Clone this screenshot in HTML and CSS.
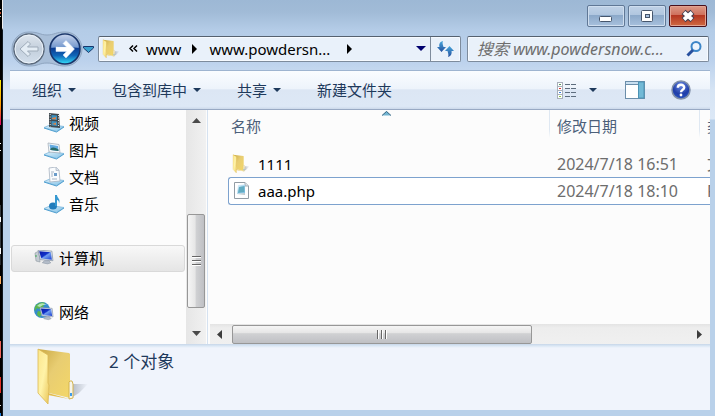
FILE: index.html
```html
<!DOCTYPE html>
<html lang="zh-CN">
<head>
<meta charset="utf-8">
<title>www.powdersnow</title>
<link rel="stylesheet" href="styles.css">
</head>
<body>
<svg width="0" height="0" class="defs" aria-hidden="true">
  <defs>
    <linearGradient id="gFront" x1="0" y1="0" x2="1" y2="1"><stop offset="0" stop-color="#fbe68c"/><stop offset=".5" stop-color="#fff3a8"/><stop offset="1" stop-color="#e9c558"/></linearGradient>
    <linearGradient id="gBack" x1="0" y1="0" x2="1" y2="1"><stop offset="0" stop-color="#c9a844"/><stop offset=".45" stop-color="#e8cd72"/><stop offset="1" stop-color="#f4d768"/></linearGradient>
    <linearGradient id="gShade" x1="0" y1="0" x2="1" y2="0"><stop offset="0" stop-color="#98a0ac" stop-opacity=".8"/><stop offset="1" stop-color="#98a0ac" stop-opacity="0"/></linearGradient>
    <linearGradient id="gOff" x1="0" y1="0" x2="0" y2="1"><stop offset="0" stop-color="#dfe6ee"/><stop offset=".5" stop-color="#c3cfdc"/><stop offset="1" stop-color="#d4e0ed"/></linearGradient>
    <linearGradient id="gOn" x1="0" y1="0" x2="0" y2="1"><stop offset="0" stop-color="#b6c6e6"/><stop offset=".44" stop-color="#4a78bd"/><stop offset=".48" stop-color="#0b3c91"/><stop offset=".72" stop-color="#0f66b8"/><stop offset="1" stop-color="#35e0fa"/></linearGradient>
    <linearGradient id="gTray" x1="0" y1="0" x2="1" y2="1"><stop offset="0" stop-color="#e2f3fc"/><stop offset="1" stop-color="#7dbfe6"/></linearGradient>
    <linearGradient id="gScreen" x1="0" y1="0" x2="1" y2="1"><stop offset="0" stop-color="#0818a8"/><stop offset=".45" stop-color="#1232c8"/><stop offset=".55" stop-color="#6f9cf0"/><stop offset="1" stop-color="#1b3fd0"/></linearGradient>
    <linearGradient id="gBlue" x1="0" y1="0" x2="0" y2="1"><stop offset="0" stop-color="#48a8dc"/><stop offset="1" stop-color="#244f9e"/></linearGradient>
    <radialGradient id="gHelp" cx=".5" cy=".25" r=".8"><stop offset="0" stop-color="#6d8ce2"/><stop offset=".6" stop-color="#1f3da8"/><stop offset="1" stop-color="#2a58c8"/></radialGradient>
    <symbol id="folder" viewBox="0 0 54 60">
      <path d="M34 50 38 37 53 37 44 46 36 51Z" fill="url(#gShade)"/>
      <path d="M3 2 34 6 35 7V51L14 46Z" fill="url(#gBack)"/>
      <path d="M35 34h2l1 3v14l-4 1V35Z" fill="#f7f5e9" stroke="#d5b44e"/>
      <path d="M35 46h2v3h-2z" fill="#3d9bea"/>
      <path d="M3 2 13 8V36L14 38 13 57 3 46Z" fill="url(#gFront)" stroke="#dcb954" stroke-width=".8"/>
      <path d="M13 46 34 52 13 48Z" fill="#e4bd4b"/>
    </symbol>
    <symbol id="tray" viewBox="0 0 20 20">
      <path d="M0 14.5 7 11.5 20 13.5 12.5 18.5Z" fill="url(#gTray)" stroke="#72b2da" stroke-width=".7"/>
      <path d="M0 15 12.5 19 20 14" fill="none" stroke="#4f9fd0"/>
    </symbol>
    <symbol id="monitor" viewBox="0 0 16 14">
      <path d="M1 0 14 1 15 10 3 9Z" fill="#dfe5ec" stroke="#8693a6" stroke-width=".7"/>
      <path d="M2 1 13 2 14 9 4 8Z" fill="url(#gScreen)"/>
      <path d="M7 10h4l2 2-3 1-5-1Z" fill="#b4bdc9" stroke="#8792a0" stroke-width=".5"/>
    </symbol>
  </defs>
</svg>

<div class="desktop" aria-hidden="true"></div>
<main class="window">
  <header class="titlebar">
    <button class="caption" aria-label="最小化"><svg width="14" height="14"><rect x=".5" y="7.5" width="12" height="5" rx="1" fill="#fff" stroke="#46566c"/></svg></button>
    <button class="caption" aria-label="最大化"><svg width="14" height="14"><rect x="1.5" y="1.5" width="11" height="11" rx="1" fill="#fff" stroke="#46566c"/><rect x="5.5" y="5.5" width="4" height="3" fill="#a9c2e0" stroke="#46566c"/></svg></button>
    <button class="caption close" aria-label="关闭"><svg width="16" height="14"><path d="M3.5 3 12.500 11M12.500 3 3.500 11" stroke="#463f50" stroke-width="6"/><path d="M4 3.500 12 10.500M12 3.500 4 10.500" stroke="#fff" stroke-width="3.800"/></svg></button>
  </header>

  <div class="navbar">
    <div class="history">
      <svg class="history-art" width="85" height="36" viewBox="0 0 85 36" aria-hidden="true">
        <path d="M18 1C28 1 29 4 36 4S45 1 54 1C64 1 71 9 71 18S64 35 54 35C45 35 44 32 36 32S28 35 18 35C8 35 1 27 1 18S8 1 18 1Z" fill="#a9bfd9" stroke="#8fa5c0"/>
        <circle cx="18" cy="18" r="15" fill="url(#gOff)" stroke="#5b697b" stroke-width="1.5"/>
        <circle cx="18" cy="18" r="14" fill="none" stroke="#edf4fb"/>
        <path d="M9 18 17 10.5 19.5 13 16.5 16H27v4H16.5L19.5 23 17 25.5Z" fill="#e4edf5" stroke="#9eabb9"/>
        <circle cx="54" cy="18" r="15" fill="url(#gOn)" stroke="#173368" stroke-width="1.5"/>
        <path d="M40.5 17A13.5 13.5 0 0 1 67.5 17Q54 13 40.5 17Z" fill="#fff" opacity=".25"/>
        <path d="M63.5 18 55 9.5 52 12.5 55.5 16H45v4.5H55.5L52 24 55 27Z" fill="#fff" stroke="#dcecff" stroke-width=".5"/>
        <path d="M72.5 15.5H82.5V17L77.5 21.5 72.5 17Z" fill="#39a0cf" stroke="#17376d"/>
      </svg>
      <button class="hit hit-arrow" aria-label="后退"></button><button class="hit hit-arrow" aria-label="前进"></button><button class="hit hit-menu" aria-label="最近的页面"></button>
    </div>
    <div class="address">
      <svg class="address-folder" width="18" height="20" aria-hidden="true"><use href="#folder" width="18" height="20"/></svg>
      <svg class="crumb-more" width="9" height="8" aria-hidden="true"><path d="M4 .5 1 3.5 4 6.5M8 .5 5 3.5 8 6.5" fill="none" stroke="#000" stroke-width="1.5"/></svg>
      <a class="crumb" href="#">www</a>
      <svg class="crumb-sep" width="6" height="10" aria-hidden="true"><path d="M1 0 6 5 1 10Z"/></svg>
      <a class="crumb" href="#">www.powdersn...</a>
      <svg class="crumb-sep last" width="6" height="10" aria-hidden="true"><path d="M1 0 6 5 1 10Z"/></svg>
      <button class="address-drop" aria-label="以前的位置"><svg width="10" height="6"><path d="M0 0H10L5 5Z" fill="#00006e"/></svg></button>
      <button class="refresh" aria-label="刷新"><svg width="17" height="16"><path d="M6 0C2 1 2 4 2.5 6H0L4.500 11 9 6H6.500C6 4 5 2 6 0Z" fill="url(#gBlue)"/><path d="M11 16C14.500 15 15 12 14.500 10H17L12.500 5 8 10H10.500C11 12 12 14 11 16Z" fill="url(#gBlue)"/></svg></button>
    </div>
    <form class="search">
      <input type="text" aria-label="搜索" placeholder="搜索 www.powdersnow.c...">
      <svg width="16" height="16" aria-hidden="true"><circle cx="10" cy="5.5" r="4.500" fill="#edf5fd" stroke="#3c86c8" stroke-width="2"/><path d="M7 9 1.500 14.500" stroke="#27509e" stroke-width="3"/></svg>
    </form>
  </div>

  <div class="toolbar">
    <button class="command">组织<i class="caret"></i></button>
    <button class="command">包含到库中<i class="caret"></i></button>
    <button class="command">共享<i class="caret"></i></button>
    <button class="command">新建文件夹</button>
    <span class="spacer"></span>
    <button class="tool view" aria-label="更改您的视图"><svg width="19" height="17" shape-rendering="crispEdges"><g fill="#fff" stroke="#a8b0ba"><rect x=".5" y=".5" width="5" height="4"/><rect x=".5" y="4.5" width="5" height="4"/><rect x=".5" y="8.5" width="5" height="4"/><rect x=".5" y="12.5" width="5" height="4"/></g><path d="M2 2h2v1H2z" fill="#57975b"/><path d="M2 6h2v1H2z" fill="#d33"/><path d="M2 10h2v1H2z" fill="#3b7fe0"/><path d="M2 14h2v1H2z" fill="#8cc63f"/><path d="M8 2h5v1H8zM14 2h5v1h-5zM8 6h5v1H8zM14 6h5v1h-5zM8 10h5v1H8zM14 10h5v1h-5zM8 14h5v1H8zM14 14h5v1h-5z" fill="#5e6d7e"/></svg><i class="caret"></i></button>
    <button class="tool" aria-label="显示预览窗格"><svg width="20" height="18"><rect x=".5" y=".5" width="19" height="17" fill="#fff" stroke="#6c8eaa"/><path d="M1 1h18v3H1z" fill="#c9dff0"/><path d="M1 3.5H14" stroke="#6c8eaa"/><path d="M13.5 1h5.5v16h-5.5z" fill="#72b9d6" stroke="#4c93b5"/></svg></button>
    <button class="tool" aria-label="获取帮助"><svg width="20" height="20"><circle cx="10" cy="10" r="9" fill="url(#gHelp)" stroke="#8190a8" stroke-width="1.5"/><path d="M6.800 7.800C6.800 3.800 13.200 3.800 13.200 7.500 13.200 9.800 10 9.700 10 12.200" fill="none" stroke="#fff" stroke-width="2.4"/><circle cx="10" cy="15" r="1.4" fill="#fff"/></svg></button>
  </div>

  <div class="panes">
    <nav class="tree">
      <a class="node leaf" href="#"><svg width="20" height="20"><use href="#tray"/><path d="M5 0 15 1 16 15 5 14Z" fill="#414a50"/><path d="M7.5 2 13 2.5V7L7.5 6.5ZM7.5 8 13 8.5 13.5 13 7.5 12.5Z" fill="#3b92c2"/><path d="M8 5 12 4V6.5L8 6ZM8 11 12 9.5V12Z" fill="#d88348"/><path d="M6.2 1V14M14.5 2V14.5" stroke="#dce5e8" stroke-dasharray="1 1.5"/></svg>视频</a>
      <a class="node leaf" href="#"><svg width="20" height="20"><use href="#tray"/><path d="M4 3 15 4.5 16 13 5 12Z" fill="#f7fafc" stroke="#a3afba" stroke-width=".8"/><path d="M5.5 4.5 14 6 14.5 11 6.5 10Z" fill="#63abe2"/><path d="M6.2 9Q9 6 14.5 9.5V11L6.5 10Z" fill="#286c68"/></svg>图片</a>
      <a class="node leaf" href="#"><svg width="20" height="20"><use href="#tray"/><path d="M5 1 12 0 15 3 16 14 6 15Z" fill="#fafcfe" stroke="#a7b2c0" stroke-width=".8"/><path d="M12 0V3.5H15" fill="#dce4ed" stroke="#a7b2c0" stroke-width=".7"/><path d="M7 5h3M7 7h2M7 9h2M8 12h5" stroke="#91a2b8" stroke-width=".8"/><path d="M10 6h3v3h-3z" fill="#6a9cca"/></svg>文档</a>
      <a class="node leaf" href="#"><svg width="20" height="20"><use href="#tray"/><ellipse cx="9" cy="12" rx="4" ry="3.5" fill="#227dbc"/><path d="M11 12V1H13C13 4 17 5 15 9.5 15 6.5 14 6 13 6V12Z" fill="#3799d1"/></svg>音乐</a>
      <a class="node root selected" href="#"><svg width="20" height="18"><path d="M1 4 5 2 6 13 2 12Z" fill="#c4cbd2" stroke="#8d979f" stroke-width=".6"/><path d="M2 6V8" stroke="#3cae55"/><use href="#monitor" x="3" y="1" width="17" height="15"/></svg>计算机</a>
      <a class="node root" href="#"><svg width="20" height="20"><circle cx="8" cy="8" r="8" fill="#358ccc"/><path d="M2 3Q7-1 11 1L9 5 5 7 3 6 1 9Q0 6 2 3ZM4 9 8 10 6 15Q3 14 3 12Z" fill="#5cb64d"/><path d="M3 4Q7-1 13 3Q9 2 6 5Z" fill="#e5fff3" opacity=".65"/><use href="#monitor" x="5" y="5" width="15" height="14"/></svg>网络</a>
    </nav>
    <div class="vscroll" aria-hidden="true">
      <svg width="9" height="5"><path d="M4.500 0 9 5H0Z" fill="#4a4a4a"/></svg>
      <div class="vtrack"><div class="vthumb"><i></i></div></div>
      <svg width="9" height="5"><path d="M0 0H9L4.500 5Z" fill="#4a4a4a"/></svg>
    </div>
    <section class="content">
      <div class="listing">
        <svg class="sort" width="9" height="5" aria-hidden="true"><path d="M0 4.5 4.5 0 9 4.5Z" fill="#72b5d2"/><path d="M0 4.5 4.5 .5 9 4.5" fill="none" stroke="#3d6884"/></svg>
        <table class="files">
          <colgroup><col><col class="col-date"><col class="col-type"></colgroup>
          <thead><tr><th>名称</th><th>修改日期</th><th>类型</th></tr></thead>
          <tbody>
            <tr><td><span class="file"><svg width="18" height="20" aria-hidden="true"><use href="#folder" width="18" height="20"/></svg>1111</span></td><td>2024/7/18 16:51</td><td>文件夹</td></tr>
            <tr class="focused"><td><span class="file"><svg width="18" height="20" aria-hidden="true"><path d="M2.5 1.5H13L16.5 5V17.5H2.5Z" fill="#fff" stroke="#929ca4"/><path d="M13 1.5V5H16.5" fill="#dce2e7" stroke="#a3adb4"/><path d="M6 4 13 3.5V12L5 13Z" fill="url(#gTray)"/><path d="M7 6 12.5 5V11L6 12Z" fill="#62acc2"/><path d="M5 13 13 12V14Z" fill="#bcc8cd"/></svg>aaa.php</span></td><td>2024/7/18 18:10</td><td>PHP 文件</td></tr>
          </tbody>
        </table>
      </div>
      <div class="hscroll" aria-hidden="true">
        <svg width="5" height="9"><path d="M5 0V9L0 4.500Z" fill="#3c3c3c"/></svg>
        <div class="htrack"><div class="hthumb"><i></i></div></div>
        <svg width="5" height="9"><path d="M0 0V9L5 4.500Z" fill="#3c3c3c"/></svg>
      </div>
    </section>
  </div>

  <footer class="details">
    <svg width="54" height="60" aria-hidden="true"><use href="#folder" width="54" height="60"/></svg>
    <p>2 个对象</p>
  </footer>
</main>
</body>
</html>
```
FILE: styles.css
```css
* { box-sizing: border-box; }
body {
  margin: 0;
  height: 100vh;
  display: flex;
  overflow: hidden;
  font: 15px/20px "Noto Sans", "Noto Sans CJK SC", sans-serif;
  color: #000;
}
.defs { position: absolute; }
button, input { font: inherit; color: inherit; margin: 0; padding: 0; border: 0; background: none; }
a { color: inherit; text-decoration: none; }
svg { flex: none; display: block; }

.desktop {
  width: 3px;
  flex: none;
  background:
    linear-gradient(#000, #000) 1px 0 / 1px 100% no-repeat,
    linear-gradient(#000 0 9px, #ccc 9px 10px, #000 10px 12px, #b42 12px 14px, #000 14px 16px, #ccc 16px 17px, #000 17px 80px, #fff000 80px, #ff9a00 105px, #e0006a 125px, #000 125px 143px, #fff 143px 144px, #000 144px 150px, #fff 150px 151px, #000 151px 205px, #343a3e 205px 217px, #fff 217px 222px, #343a3e 222px 248px, #fff 248px 254px, #252a2e 254px 265px, #000 265px 276px, #ffad5c 276px 284px, #000 284px 341px, #f0645a 341px 358px, #000 358px 377px, #e23026 377px 393px, #000 393px 405px, #ddd 405px 406px, #000 406px 413px, #2080e0 413px) 0 0 / 1px 100% no-repeat,
    linear-gradient(#eee 0 28px, #101820 30px) 2px 0 / 1px 100% no-repeat;
}
.window {
  flex: 1;
  min-width: 0;
  display: flex;
  flex-direction: column;
  padding: 0 5px 6px 7px;
  background: linear-gradient(#9db8d5 0, #a1bbd7 12px, #b4cce7 30px, #bbd1ec 60px, #d6e4f4 90px, #dce8f6 119px, #b9d1ea 120px, #b9d1ea);
}

.titlebar { display: flex; justify-content: flex-end; gap: 3px; padding: 5px 3px 0 0; height: 34px; }
.caption {
  width: 38px;
  height: 22px;
  display: flex;
  align-items: center;
  justify-content: center;
  border: 1px solid #607896;
  border-radius: 2px;
  box-shadow: inset 0 0 0 1px #cfdeef;
  background: linear-gradient(#c0d2e7 0, #b0c6df 45%, #8ba8c9 46%, #a8c1dd 100%);
}
.close {
  border-color: #49101b;
  box-shadow: inset 0 0 0 1px #e2a391;
  background: linear-gradient(#dc9a87 0, #cf705c 45%, #b43520 46%, #cf6a42 100%);
}

.navbar { display: flex; align-items: center; gap: 6px; height: 30px; padding-right: 1px; }
.history { position: relative; width: 82px; height: 30px; display: flex; flex: none; }
.history-art { position: absolute; left: 1px; top: -3px; }
.hit { position: relative; height: 30px; }
.hit-arrow { width: 35px; }
.hit-menu { width: 12px; }
.address, .search {
  height: 26px;
  display: flex;
  align-items: center;
  border: 1px solid #7d8b9c;
  border-top-color: #55616f;
  border-radius: 2px;
  background: #e9f1fa;
  box-shadow: inset 0 0 0 1px #f6faff;
}
.address { flex: 1; min-width: 0; }
.address-folder { margin: 0 9px 0 3px; }
.crumb-more { margin-right: 8px; }
.crumb-sep { margin: 0 12px 0 10px; }
.last { margin-left: 16px; }
.address-drop { margin-left: auto; width: 18px; height: 24px; display: flex; align-items: center; justify-content: center; }
.refresh { width: 30px; height: 24px; display: flex; align-items: center; justify-content: center; border-left: 1px solid #7d8b9c; }
.search { width: 242px; padding: 0 6px 0 9px; }
.search input { flex: 1; min-width: 0; outline: 0; font-size: 16px; font-style: italic; }
.search input::placeholder { color: #6d6d6d; opacity: 1; }

.toolbar {
  height: 40px;
  flex: none;
  margin-top: 6px;
  padding: 0 19px 0 22px;
  display: flex;
  align-items: center;
  border-top: 1px solid #9eb4d0;
  border-bottom: 1px solid #98a9c4;
  background: linear-gradient(#fafcff 0, #edf3fb 48%, #dce6f4 49%, #dde8f6 93%, #ccd9ea 100%);
  color: #1e395b;
}
.command { display: flex; align-items: center; gap: 6px; margin-right: 36px; white-space: nowrap; }
.caret { width: 8px; height: 4px; background: #1e395b; clip-path: polygon(0 0, 100% 0, 50% 100%); }
.spacer { flex: 1; }
.tool { display: flex; align-items: center; margin-left: 26px; }
.view { gap: 13px; }
.view + .tool { margin-left: 28px; }

.panes { flex: 1; min-height: 0; display: flex; background: #fcfcfc; }
.tree { width: 176px; flex: none; }
.node { display: flex; align-items: center; gap: 5px; height: 27px; padding-bottom: 2px; white-space: nowrap; }
.leaf { padding-left: 34px; }
.root { margin: 27px 1px 0; padding-left: 22px; border: 1px solid transparent; border-radius: 3px; }
.selected { border-color: #d9d9d9; background: linear-gradient(#f8f8f8, #e5e5e5); }

.vscroll { width: 20px; flex: none; display: flex; flex-direction: column; align-items: center; padding: 8px 1px; background: linear-gradient(90deg, #e6e6e6, #f1f1f1); }
.vtrack { flex: 1; align-self: stretch; display: flex; align-items: flex-end; padding: 10px 0 23px; }
.vthumb, .hthumb { display: flex; align-items: center; justify-content: center; border: 1px solid #979797; border-radius: 2px; }
.vthumb { width: 18px; height: 94px; background: linear-gradient(90deg, #f5f5f5 0, #e6e6e6 45%, #d0d1d3 50%, #bfc0c4 100%); }
.vthumb i { width: 9px; height: 10px; background: repeating-linear-gradient(#666 0 1px, #fff 1px 2px, transparent 2px 4px); }

.content { flex: 1; min-width: 0; margin-left: 1px; padding-left: 2px; display: flex; flex-direction: column; border-left: 1px solid #d6e2f0; }
.listing { position: relative; flex: 1; min-height: 0; overflow: hidden; padding-left: 18px; }
.sort { position: absolute; left: 172px; top: 1px; }
.files { width: calc(100% + 66px); table-layout: fixed; border-collapse: separate; border-spacing: 0; }
.col-date { width: 150px; }
.col-type { width: 77px; }
.files th, .files td { padding: 0 0 0 8px; text-align: left; font-weight: 400; white-space: nowrap; }
.files th { height: 31px; color: #4c607a; }
.files th:first-child { padding-left: 3px; }
.files th + th { background: linear-gradient(#dfe8f2, #dfe8f2 70%, #fcfcfc) 0 0 / 1px 28px no-repeat; }
.files tbody::before { content: ""; display: table-row; height: 9px; }
.files td { height: 27px; color: #6d6d6d; font-size: 16px; }
.files td:first-child { padding-left: 4px; color: #000; font-size: 15px; }
.files .focused td { height: 28px; background: #fff; border: solid #7da2ce; border-width: 1px 0; }
.files .focused td:first-child { padding-left: 3px; border-left-width: 1px; border-radius: 3px 0 0 3px; }
.file { display: flex; align-items: center; gap: 8px; }

.hscroll { height: 20px; flex: none; display: flex; align-items: center; padding: 0 8px 0 7px; background: linear-gradient(#e3e3e3, #ededed 20%, #f0f0f0); }
.htrack { flex: 1; padding: 0 10px; }
.hthumb { width: 66%; height: 19px; background: linear-gradient(#f5f5f5 0, #e6e6e6 40%, #d0d1d3 45%, #bfc0c4 100%); }
.hthumb i { width: 10px; height: 9px; background: repeating-linear-gradient(90deg, #666 0 1px, #fff 1px 2px, transparent 2px 4px); }

.details {
  height: 66px;
  flex: none;
  display: flex;
  gap: 20px;
  padding: 3px 0 0 25px;
  background: linear-gradient(#c7d6e8 0, #dbe8f5 2px, #f0f4fc 4px, #f0f4fc);
  color: #1e395b;
}
.details p { margin: 5px 0 0; font-size: 17px; }
```
